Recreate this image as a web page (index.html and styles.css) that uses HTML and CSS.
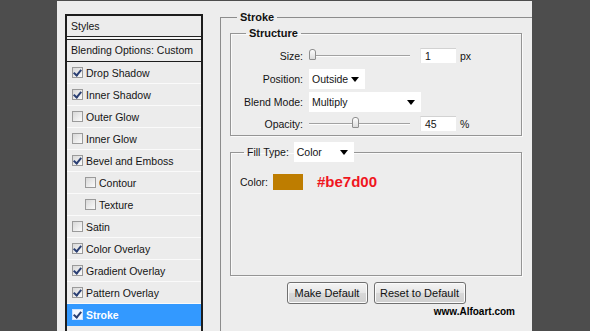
FILE: index.html
```html
<!DOCTYPE html>
<html>
<head>
  <meta http-equiv="Content-type" content="text/html; charset=utf-8">
  <title>Layer Style - Stroke</title>
<link rel="stylesheet" href="styles.css">
</head>

<body>
  <div class="panel">
    <div class="styles-list">
      <div class="list-head">Styles</div>
      <div class="list-blend">Blending Options: Custom</div>
      <div class="row"><span class="cb on"></span>Drop Shadow</div>
      <div class="row"><span class="cb on"></span>Inner Shadow</div>
      <div class="row"><span class="cb"></span>Outer Glow</div>
      <div class="row"><span class="cb"></span>Inner Glow</div>
      <div class="row"><span class="cb on"></span>Bevel and Emboss</div>
      <div class="row sub"><span class="cb"></span>Contour</div>
      <div class="row sub"><span class="cb"></span>Texture</div>
      <div class="row"><span class="cb"></span>Satin</div>
      <div class="row"><span class="cb on"></span>Color Overlay</div>
      <div class="row"><span class="cb on"></span>Gradient Overlay</div>
      <div class="row"><span class="cb on"></span>Pattern Overlay</div>
      <div class="row selected"><span class="cb on"></span>Stroke</div>
    </div>

    <div class="main">
      <fieldset class="stroke">
        <legend class="title">Stroke</legend>

        <fieldset class="group structure">
          <legend class="title">Structure</legend>
          <div class="form">
            <label>Size:</label>
            <div class="ctrl">
              <div class="slider"><span class="thumb" style="left:0px"></span></div>
              <div class="num">1</div><span class="unit">px</span>
            </div>
            <label>Position:</label>
            <div class="ctrl">
              <div class="select pos">Outside<span class="arrow"></span></div>
            </div>
            <label>Blend Mode:</label>
            <div class="ctrl">
              <div class="select blend">Multiply<span class="arrow"></span></div>
            </div>
            <label>Opacity:</label>
            <div class="ctrl">
              <div class="slider"><span class="thumb" style="left:43px"></span></div>
              <div class="num">45</div><span class="unit">%</span>
            </div>
          </div>
        </fieldset>

        <fieldset class="group fill">
          <legend class="fill-legend">Fill Type: <span class="select filltype">Color<span class="arrow"></span></span></legend>
          <div class="color-row">
            <span>Color:</span>
            <span class="swatch"></span>
            <span class="hex">#be7d00</span>
          </div>
        </fieldset>

        <div class="buttons">
          <button class="btn make">Make Default</button>
          <button class="btn reset">Reset to Default</button>
        </div>
        <div class="credit">www.Alfoart.com</div>
      </fieldset>
    </div>
  </div>
</body>
</html>
```

FILE: styles.css
```css
body {
  margin: 0;
  background: #4d4d4d;
  font-family: "Liberation Sans", Arial, sans-serif;
  font-size: 10.5px;
  color: #141414;
  overflow: hidden;
}

.panel {
  margin: 1px 0 0 57px;
  width: 475px;
  height: 330px;
  background: #ededed;
  display: flex;
  gap: 17px;
  padding-left: 8px;
  box-sizing: border-box;
}

/* left column */
.styles-list {
  margin-top: 13px;
  width: 138px;
  border: 2px solid #1d1d1d;
  border-bottom: none;
  box-sizing: border-box;
  background: #ececec;
}
.list-head {
  height: 20px;
  line-height: 20px;
  padding-left: 4px;
  border-bottom: 1px solid #222;
  box-shadow: 0 2px 0 #f6f6f6;
}
.list-blend {
  margin-top: 2px;
  border-top: 1px solid #222;
  height: 21px;
  line-height: 21px;
  padding-left: 4px;
  border-bottom: 1px solid #1d1d1d;
}
.row {
  height: 21px;
  border-bottom: 1px solid #fafafa;
  display: flex;
  align-items: center;
  padding-left: 5px;
}
.row.sub { padding-left: 18px; }
.row.selected {
  background: #3399ff;
  color: #fff;
  font-weight: bold;
  border-bottom-color: #3399ff;
}
.cb {
  width: 9px;
  height: 9px;
  border: 1px solid #9a9a9a;
  background: linear-gradient(135deg, #d8d8d8, #fbfbfb);
  margin-right: 3px;
  position: relative;
}
.cb.on::after {
  content: "";
  position: absolute;
  left: 2px;
  top: 0px;
  width: 3px;
  height: 6px;
  border: solid #2a3f73;
  border-width: 0 2px 2px 0;
  transform: rotate(40deg);
}
.selected .cb { border-color: #cfe4ff; background: #f4f8ff; }

/* right side */
.main {
  flex: 1;
  margin-top: 10px;
}
fieldset {
  margin: 0;
  min-width: 0;
}
.title {
  font-weight: bold;
  font-size: 11px;
  line-height: 13px;
  padding: 0 3px;
  color: #111;
}
.stroke {
  border: 1px solid #8c8c8c;
  border-right: none;
  border-bottom: none;
  padding: 0 10px 0 9px;
  height: 320px;
  box-sizing: border-box;
}
.stroke > .title { margin-left: 7px; }

.group {
  border: 1px solid #959595;
  box-shadow: inset 1px 1px 0 #fafafa, 1px 1px 0 #fafafa;
}
.structure {
  margin-top: 3px;
  padding: 4px 0 1px 0;
}
.structure > .title { margin-left: 15px; }

.form {
  display: grid;
  grid-template-columns: 72px 1fr;
  column-gap: 6px;
  grid-template-rows: 23px 24px 22px 21px;
  align-items: center;
}
.form label { text-align: right; }
.ctrl {
  display: flex;
  align-items: center;
}
.slider {
  position: relative;
  width: 101px;
  height: 1px;
  background: #a2a2a2;
  border-bottom: 1px solid #fdfdfd;
}
.thumb {
  position: absolute;
  top: -6px;
  width: 5px;
  height: 9px;
  border: 1px solid #8e8e8e;
  border-radius: 3px 3px 1px 1px;
  background: linear-gradient(#fdfdfd, #dcdcdc);
}
.num {
  margin-left: 10px;
  width: 31px;
  height: 14px;
  line-height: 14px;
  padding-left: 4px;
  background: #fff;
  border-top: 1px solid #d2d2d2;
  border-left: 1px solid #e6e6e6;
}
.unit { margin-left: 4px; }

.select {
  position: relative;
  display: inline-block;
  height: 20px;
  line-height: 21px;
  padding-left: 3px;
  background: #fff;
  box-sizing: border-box;
  font-weight: normal;
}
.pos { width: 56px; }
.blend { width: 112px; }
.filltype { width: 60px; margin-left: 2px; }
.arrow {
  position: absolute;
  right: 6px;
  top: 8px;
  border: 4px solid transparent;
  border-top: 5px solid #000;
  border-bottom: none;
}

.fill {
  margin-top: 5px;
  height: 135px;
  box-sizing: border-box;
  padding: 0 0 0 9px;
}
.fill-legend {
  margin-left: 4px;
  padding: 0 0 0 3px;
  line-height: 22px;
  font-weight: normal;
}
.color-row {
  display: flex;
  align-items: center;
  margin-top: 10px;
}
.swatch {
  width: 30px;
  height: 16px;
  background: #be7d00;
  margin-left: 5px;
}
.hex {
  margin-left: 14px;
  color: #f0161e;
  font-weight: bold;
  font-size: 15px;
}

.buttons {
  display: flex;
  justify-content: center;
  gap: 6px;
  margin-top: 6px;
}
.btn {
  height: 22px;
  font-family: "Liberation Sans", Arial, sans-serif;
  font-size: 11px;
  color: #111;
  border: 1px solid #707070;
  border-radius: 3px;
  background: linear-gradient(#f4f4f4, #e6e6e6 50%, #d8d8d8 51%, #d0d0d0);
  box-shadow: inset 0 0 0 1px #fbfbfb;
  padding: 0;
}
.make { width: 81px; }
.reset { width: 92px; }
.credit {
  text-align: right;
  padding-right: 7px;
  margin-top: 2px;
  font-weight: bold;
  font-size: 10px;
  line-height: 12px;
  color: #000;
}
```
